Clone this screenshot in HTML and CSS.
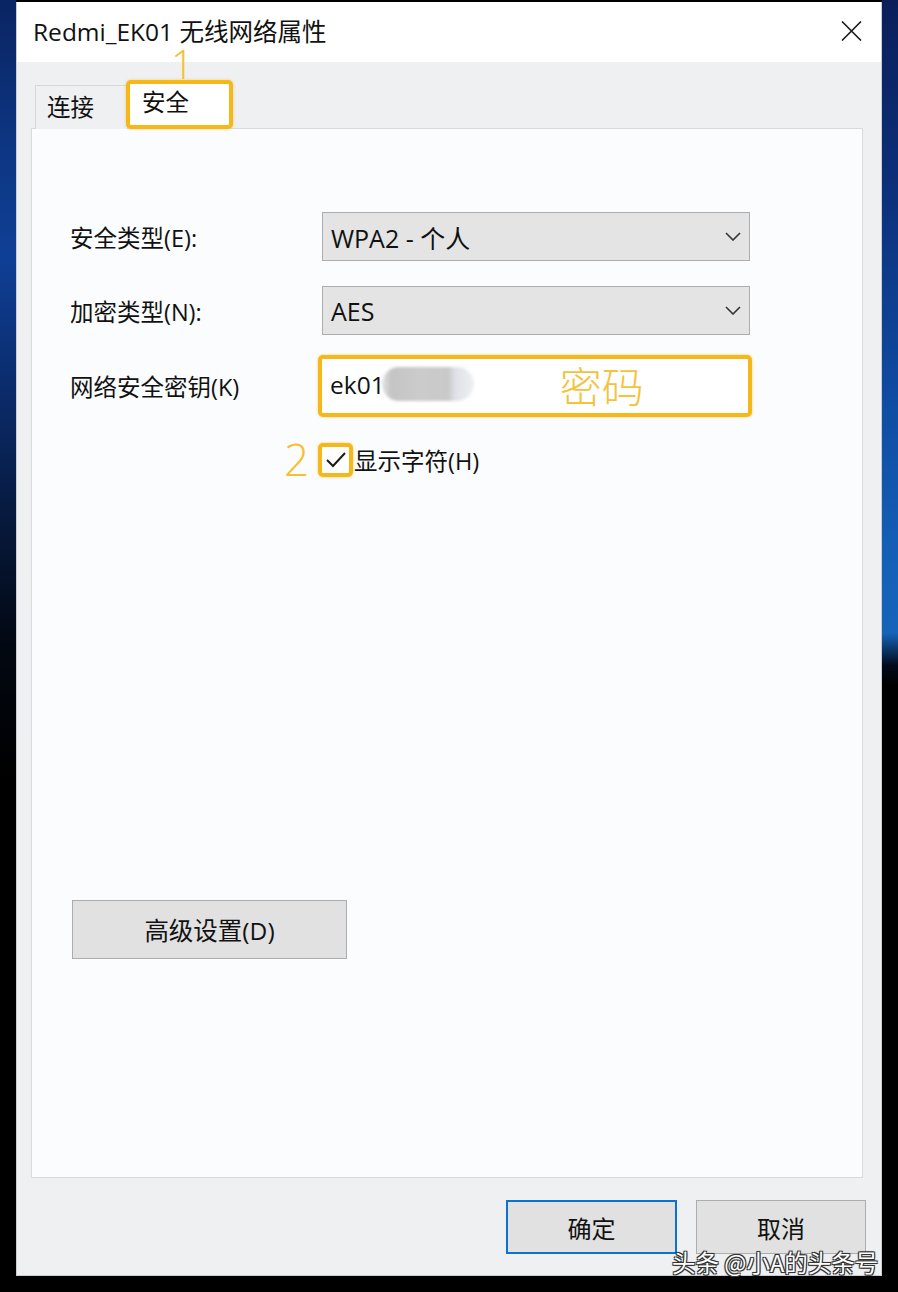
FILE: index.html
```html
<!DOCTYPE html>
<html lang="zh-CN">
<head>
<meta charset="utf-8">
<title>Redmi_EK01 无线网络属性</title>
<link rel="stylesheet" href="styles.css">
</head>
<body>
<div class="dialog">
  <div class="titlebar">
    <span class="title">Redmi_EK01 无线网络属性</span>
    <svg class="close" width="21" height="20" viewBox="0 0 21 20"><path d="M1 0.5L20 19.5M20 0.5L1 19.5"/></svg>
  </div>
  <div class="content">
    <div class="tabs">
      <div class="tab">连接</div>
      <div class="tab active"><span class="mark mark1">1</span>安全</div>
    </div>
    <div class="panel">
      <div class="row">
        <span class="lbl">安全类型(E):</span>
        <div class="combo"><span>WPA2 - 个人</span><svg class="chev" width="16" height="9" viewBox="0 0 16 9"><path d="M1 1L8 8L15 1"/></svg></div>
      </div>
      <div class="row r2">
        <span class="lbl">加密类型(N):</span>
        <div class="combo"><span>AES</span><svg class="chev" width="16" height="9" viewBox="0 0 16 9"><path d="M1 1L8 8L15 1"/></svg></div>
      </div>
      <div class="row r3">
        <span class="lbl">网络安全密钥(K)</span>
        <div class="keybox">
          <span class="keytext">ek01</span><span class="blurblock"></span>
          <span class="keynote">密码</span>
        </div>
      </div>
      <div class="row r4">
        <span class="lbl lbl-mark"><span class="mark mark2">2</span></span>
        <span class="checkbox"><svg width="22" height="18" viewBox="0 0 22 18"><path d="M2 9L8 15L20 2"/></svg></span>
        <span class="cblabel">显示字符(H)</span>
      </div>
      <button class="btn adv">高级设置(D)</button>
    </div>
    <div class="footer">
      <button class="btn ok">确定</button>
      <button class="btn cancel">取消</button>
    </div>
  </div>
</div>
<div class="watermark">头条 @小A的头条号</div>
</body>
</html>
```

FILE: styles.css
```css
html, body {
  margin: 0;
  padding: 0;
}
body {
  width: 898px;
  height: 1292px;
  overflow: hidden;
  position: relative;
  font-family: "Open Sans", "Noto Sans CJK SC", sans-serif;
  color: #111;
  background:
    linear-gradient(180deg, #0a2462 0%, #0d3784 12%, #0f3f95 20%, #0b2c6c 30%, #061634 42%, #020812 50%, #000 60%, #000 100%) left top / 16px 100% no-repeat,
    linear-gradient(180deg, #0a1f5a 0%, #0c2f78 14%, #0f4aa0 30%, #1561b8 44%, #1564b8 49%, #020a1a 51.5%, #000 53%, #000 100%) right top / 16px 100% no-repeat,
    #000;
}
.dialog {
  margin: 2px 0 0 16px;
  width: 866px;
  height: 1274px;
  box-sizing: border-box;
  border: 1px solid #c9ccd1;
  border-top: none;
  display: flex;
  flex-direction: column;
  background: #f0f0f1;
}
.titlebar {
  height: 60px;
  flex: none;
  background: #fff;
  display: flex;
  align-items: center;
  justify-content: space-between;
  padding: 0 19px 0 16px;
}
.title {
  font-size: 24.5px;
  line-height: 1;
  color: #111;
}
.close {
  margin-top: -2px;
}
.close path {
  stroke: #1a1a1a;
  stroke-width: 1.6;
  fill: none;
}
.content {
  flex: 1;
  display: flex;
  flex-direction: column;
  padding: 18px 18px 0 14px;
  background: #eff0f2;
}
.tabs {
  display: flex;
  align-items: flex-end;
  height: 49px;
  margin-left: 4px;
  margin-bottom: -1px;
  position: relative;
  z-index: 1;
}
.tab {
  box-sizing: border-box;
  width: 93px;
  height: 44px;
  border: 1px solid #d6d7d9;
  border-bottom: none;
  background: #eff0f2;
  font-size: 23.5px;
  display: flex;
  align-items: center;
  padding-left: 11px;
  padding-bottom: 4px;
}
.tab.active {
  position: relative;
  width: 107px;
  height: 49px;
  margin-left: -2px;
  border: 4px solid #f5b81b;
  border-radius: 5px;
  background: #fff;
  padding-left: 12px;
  padding-top: 0;
  padding-bottom: 8px;
  box-shadow: 0 0 3px rgba(245, 184, 27, 0.6);
}
.mark {
  color: #f5c02f;
  font-weight: 300;
  line-height: 1;
}
.mark1 {
  position: absolute;
  left: 41px;
  top: -34px;
  font-size: 40px;
  line-height: 28px;
  height: 28px;
}
.panel {
  box-sizing: border-box;
  height: 1050px;
  flex: none;
  border: 1px solid #d8dadd;
  background: #fbfcfe;
  padding: 83px 0 0 38px;
  display: flex;
  flex-direction: column;
  align-items: flex-start;
}
.row {
  display: flex;
  align-items: center;
}
.r2 { margin-top: 25px; }
.r3 { margin-top: 20px; }
.r4 { margin-top: 22px; }
.lbl {
  width: 252px;
  flex: none;
  font-size: 23.5px;
  color: #111;
}
.combo {
  box-sizing: border-box;
  width: 428px;
  height: 49px;
  background: #e4e4e5;
  border: 1px solid #adadad;
  display: flex;
  align-items: center;
  justify-content: space-between;
  padding: 0 8px 0 8px;
  font-size: 25px;
}
.chev path {
  stroke: #333;
  stroke-width: 1.6;
  fill: none;
}
.keybox {
  box-sizing: border-box;
  width: 434px;
  height: 62px;
  margin-left: -4px;
  border: 4px solid #f5b81b;
  border-radius: 5px;
  background: #fff;
  display: flex;
  align-items: center;
  padding-left: 8px;
  box-shadow: 0 0 3px rgba(245, 184, 27, 0.6);
  font-size: 24.5px;
}
.keytext {
  padding-bottom: 4px;
}
.blurblock {
  display: inline-block;
  width: 92px;
  height: 34px;
  margin-left: -3px;
  margin-bottom: 4px;
  border-radius: 17px;
  background: linear-gradient(90deg, #e3e3e3 0%, #c4c4c4 10%, #cbcbcb 40%, #c9c9c9 72%, #dfe2e6 80%, #eef0f2 100%);
  filter: blur(1.5px);
}
.keynote {
  margin-left: 86px;
  font-size: 42px;
  font-weight: 300;
  color: #f5c23a;
  line-height: 1;
  padding-top: 2px;
}
.lbl-mark {
  display: flex;
  justify-content: flex-end;
  padding-right: 13px;
  box-sizing: border-box;
}
.mark2 {
  font-size: 44px;
  margin-top: -2px;
}
.checkbox {
  box-sizing: border-box;
  width: 35px;
  height: 34px;
  margin-left: -4px;
  border: 4px solid #f5b81b;
  border-radius: 5px;
  background: #fff;
  display: flex;
  align-items: center;
  justify-content: center;
  box-shadow: 0 0 3px rgba(245, 184, 27, 0.6);
}
.checkbox path {
  stroke: #1a1a1a;
  stroke-width: 2;
  fill: none;
}
.cblabel {
  font-size: 23.5px;
  margin-left: 1px;
}
.btn {
  font-family: "Open Sans", "Noto Sans CJK SC", sans-serif;
  font-size: 24px;
  color: #111;
  background: #e1e1e1;
  border: 1px solid #adadad;
  box-sizing: border-box;
  padding: 0;
  margin: 0;
}
.adv {
  margin-top: 419px;
  margin-left: 2px;
  width: 275px;
  height: 59px;
  font-size: 24.5px;
}
.footer {
  display: flex;
  justify-content: flex-end;
  gap: 19px;
  padding-top: 22px;
  margin-right: -3px;
}
.ok {
  width: 171px;
  height: 54px;
  border: 2px solid #0a73d2;
}
.cancel {
  width: 170px;
  height: 54px;
}
.watermark {
  position: absolute;
  left: 672px;
  top: 1245px;
  font-family: "Noto Sans CJK SC", sans-serif;
  font-size: 23.5px;
  color: #fff;
  text-shadow: -1px -1px 0 #333, 1px -1px 0 #333, -1px 1px 0 #333, 1px 1px 0 #333, 0 0 2px #000;
}
```
